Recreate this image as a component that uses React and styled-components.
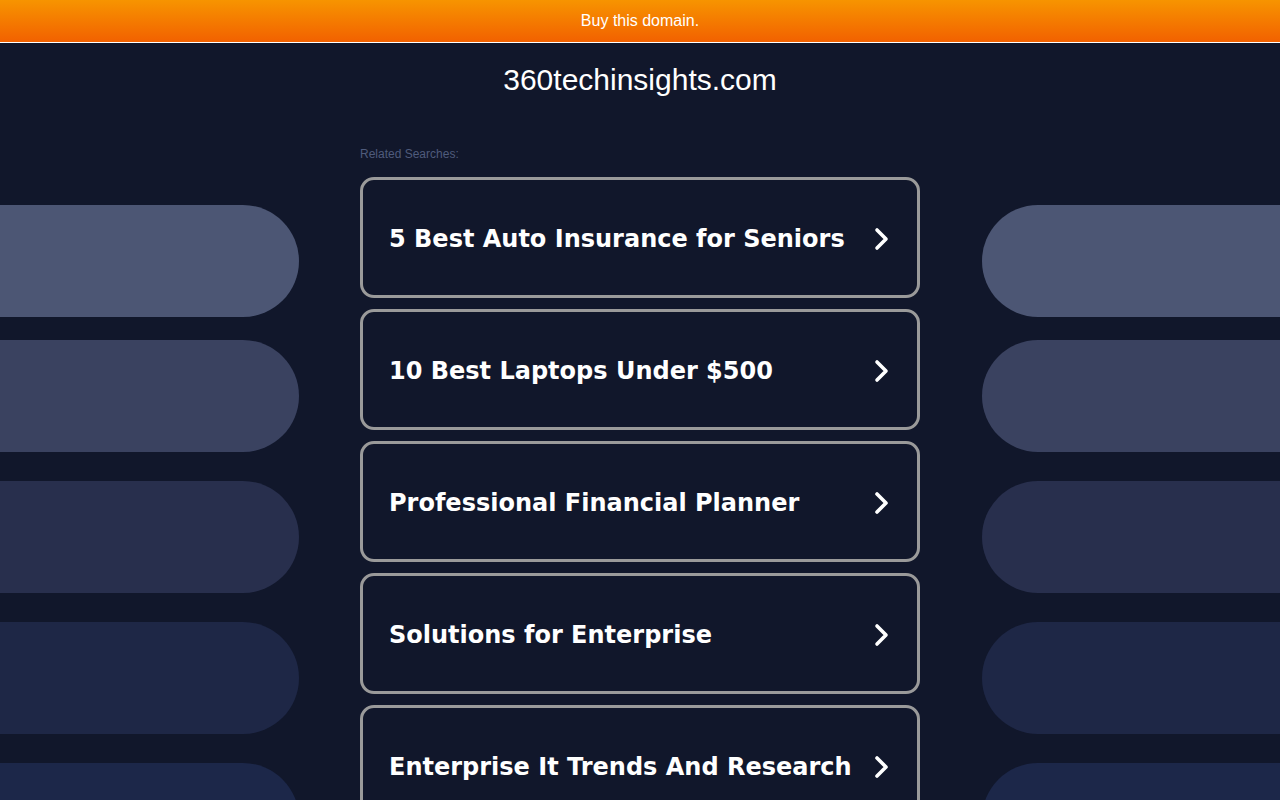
import styled, { createGlobalStyle } from 'styled-components';

const GlobalStyle = createGlobalStyle`
  html, body {
    margin: 0;
    padding: 0;
    background: #11172b;
    overflow: hidden;
  }
  body {
    font-family: "Liberation Sans", Arial, sans-serif;
  }
`;

const searches = [
  '5 Best Auto Insurance for Seniors',
  '10 Best Laptops Under $500',
  'Professional Financial Planner',
  'Solutions for Enterprise',
  'Enterprise It Trends And Research',
];

const pillColors = ['#4c5674', '#3a4260', '#282f4d', '#1e2746', '#1c2749'];

const App = () => {
  return (
    <>
      <GlobalStyle />
      <Page>
        <TopBar href="#">Buy this domain.</TopBar>
        <Title>360techinsights.com</Title>
        <Body>
          <PillColumn>
            {pillColors.map((c) => (
              <Pill key={c} $color={c} $side="left" />
            ))}
          </PillColumn>
          <Center>
            <Label>Related Searches:</Label>
            <CardList>
              {searches.map((s) => (
                <Card key={s} href="#">
                  <span>{s}</span>
                  <Chevron viewBox="0 0 18 24">
                    <polyline points="4,3 13,12 4,21" />
                  </Chevron>
                </Card>
              ))}
            </CardList>
          </Center>
          <PillColumn>
            {pillColors.map((c) => (
              <Pill key={c} $color={c} $side="right" />
            ))}
          </PillColumn>
        </Body>
      </Page>
    </>
  );
};

const Page = styled.div`
  width: 1280px;
  height: 800px;
  overflow: hidden;
`;

const TopBar = styled.a`
  display: flex;
  align-items: center;
  justify-content: center;
  height: 42px;
  background: linear-gradient(to bottom, #f79400, #f26100);
  border-bottom: 1px solid #ffffff;
  color: #ffffff;
  font-size: 16px;
  text-decoration: none;
`;

const Title = styled.h1`
  margin: 0;
  padding-top: 19px;
  height: 51px;
  line-height: 35px;
  text-align: center;
  color: #ffffff;
  font-size: 30px;
  font-weight: normal;
`;

const Body = styled.div`
  display: grid;
  grid-template-columns: 299px 1fr 298px;
  margin-top: 33px;
`;

const PillColumn = styled.div`
  display: flex;
  flex-direction: column;
  gap: 29px;
  padding-top: 59px;

  & > :first-child {
    margin-bottom: -6px;
  }
`;

const Pill = styled.div`
  height: 112px;
  background: ${(p) => p.$color};
  border-radius: ${(p) => (p.$side === 'left' ? '0 56px 56px 0' : '56px 0 0 56px')};
`;

const Center = styled.div`
  width: 560px;
  justify-self: start;
  margin-left: 61px;
`;

const Label = styled.div`
  height: 17px;
  color: #4f5b7c;
  font-size: 12px;
  line-height: 17px;
  margin-bottom: 14px;
`;

const CardList = styled.div`
  display: flex;
  flex-direction: column;
  gap: 11px;
`;

const Card = styled.a`
  display: flex;
  align-items: center;
  justify-content: space-between;
  box-sizing: border-box;
  height: 121px;
  padding: 3px 26px 0 26px;
  border: 3px solid #9a9a9a;
  border-radius: 14px;
  color: #ffffff;
  text-decoration: none;
  font-family: "DejaVu Sans", Verdana, sans-serif;
  font-weight: bold;
  font-size: 24px;
`;

const Chevron = styled.svg`
  width: 18px;
  height: 24px;
  flex-shrink: 0;
  fill: none;
  stroke: #ffffff;
  stroke-width: 3.6;
  stroke-linecap: round;
  stroke-linejoin: round;
`;

export default App;
